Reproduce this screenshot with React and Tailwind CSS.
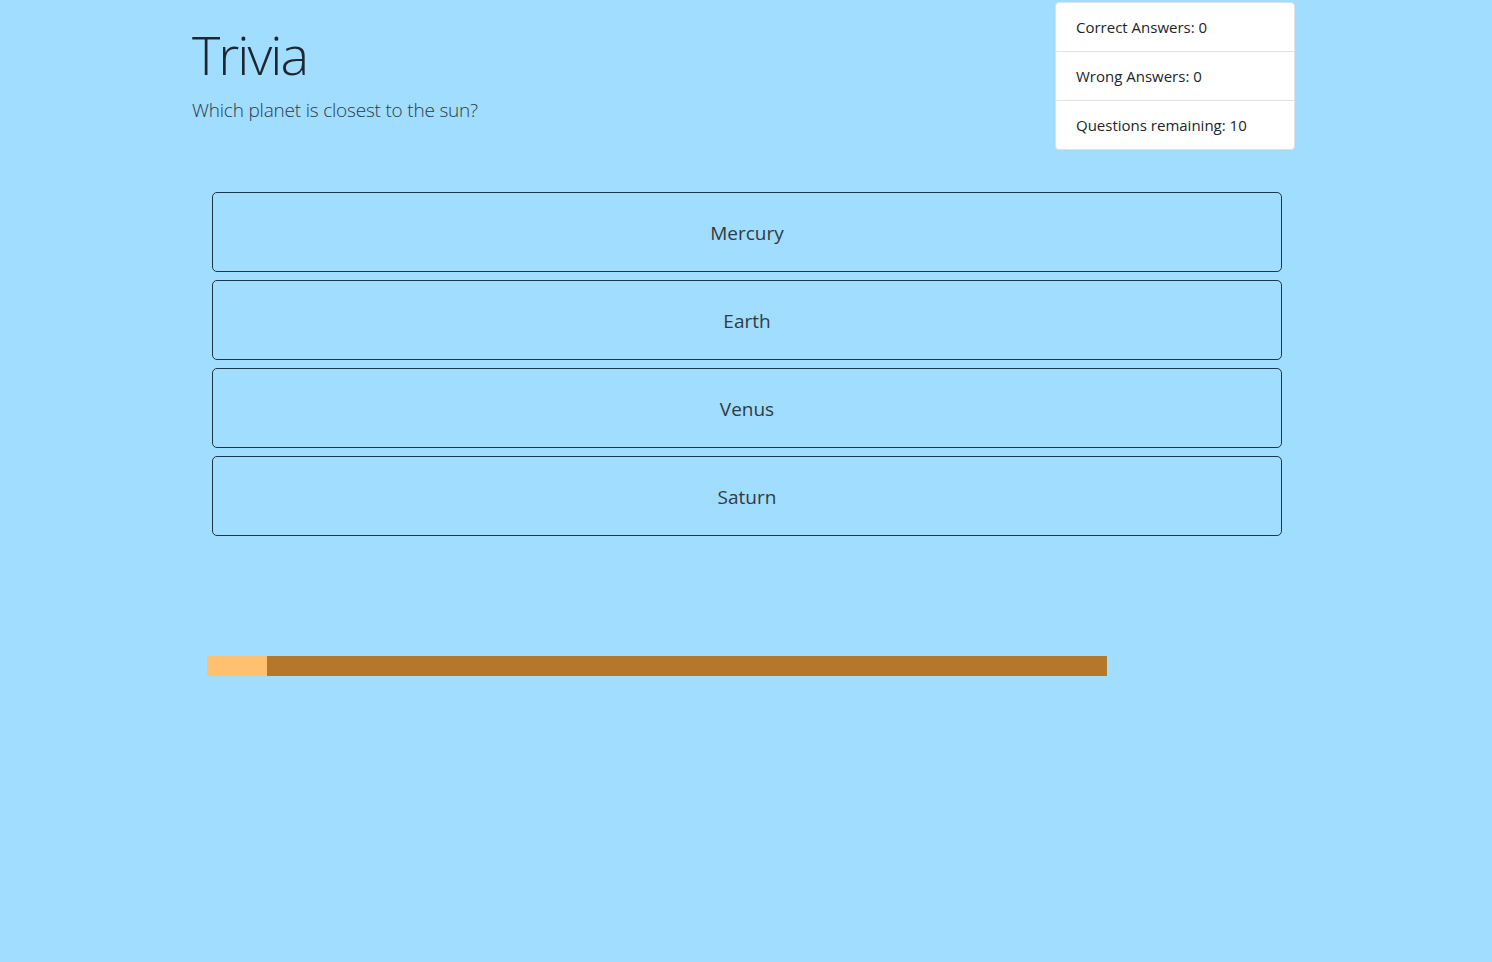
export default function App() {
  const answers = ["Mercury", "Earth", "Venus", "Saturn"];
  return (
    <div className="min-h-[962px] w-full bg-[#a1ddfe] text-[#212529]" style={{ fontFamily: '"Open Sans", "Noto Sans", sans-serif' }}>
      <div className="ml-[192px] w-[1103px] flex justify-between items-start">
        <div className="pt-[22px]">
          <h1 className="text-[54px] font-light leading-[1.2] text-[#1d2733] tracking-[-2px]">Trivia</h1>
          <p className="mt-[9px] text-[19px] font-light text-[#2a3b49] tracking-[-0.2px]">Which planet is closest to the sun?</p>
        </div>
        <ul className="mt-[2px] w-[240px] bg-white border border-[#dfdfdf] rounded-[4px] text-[15px] text-[#212529]">
          <li className="h-[49px] pt-[1px] px-[20px] flex items-center border-b border-[#e2e2e2]">Correct Answers: 0</li>
          <li className="h-[49px] pt-[1px] px-[20px] flex items-center border-b border-[#e2e2e2]">Wrong Answers: 0</li>
          <li className="h-[48px] pt-[1px] px-[20px] flex items-center">Questions remaining: 10</li>
        </ul>
      </div>
      <div className="ml-[212px] w-[1070px] mt-[42px] flex flex-col gap-[8px]">
        {answers.map((a) => (
          <button key={a} className="h-[80px] w-full pt-[2px] border border-[#1e3647] rounded-[5px] text-[19px] text-[#343a40]">
            {a}
          </button>
        ))}
      </div>
      <div className="ml-[207px] mt-[120px] w-[900px] h-[20px] flex bg-[#b5772a]">
        <div className="w-[60px] h-full bg-[#ffc06f]" />
      </div>
    </div>
  );
}
